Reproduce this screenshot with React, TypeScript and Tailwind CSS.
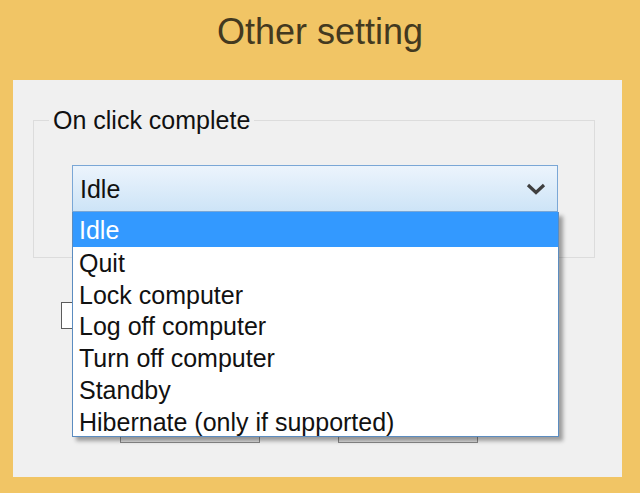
import React from "react";

const options = [
    "Quit",
    "Lock computer",
    "Log off computer",
    "Turn off computer",
    "Standby",
    "Hibernate (only if supported)",
];

export default function App() {
    return (
        <div
            className="w-[640px] h-[493px] bg-[#f1c565] flex flex-col overflow-hidden"
            style={{ fontFamily: '"Liberation Sans", Arial, sans-serif' }}
        >
            {/* Title */}
            <div className="h-[80px] pt-[10px] text-center text-[36px] leading-[44px] text-[#43391f]">
                Other setting
            </div>

            {/* Panel */}
            <div className="ml-[13px] w-[609px] h-[397px] bg-[#f0f0f0] flex flex-col">
                <fieldset className="ml-[20px] mt-[25px] w-[562px] h-[153px] border border-[#dcdcdc] pt-[30px]">
                    <legend className="ml-[15px] px-[4px] text-[25px] leading-[30px] text-[#111]">
                        On click complete
                    </legend>

                    <div className="relative z-10 ml-[38px] w-[486px]">
                        {/* Combobox */}
                        <div className="h-[47px] border border-[#7aa7d6] bg-gradient-to-b from-[#ecf4fc] to-[#cde4f7] flex items-center justify-between pl-[7px] pr-[11px]">
                            <span className="text-[25px] leading-[30px] text-[#111]">Idle</span>
                            <svg width="20" height="12" viewBox="0 0 20 12">
                                <path d="M2 2 L10 9.5 L18 2" fill="none" stroke="#3f3f3f" strokeWidth="3.2" />
                            </svg>
                        </div>

                        {/* Dropdown list */}
                        <div className="absolute left-0 top-full w-[487px] h-[225px] bg-white border border-[#5b8cc0] border-t-0 shadow-[4px_4px_4px_rgba(0,0,0,0.35)] flex flex-col">
                            <div className="h-[35px] shrink-0 bg-[#3399ff] text-white pl-[6px] flex items-center text-[25px] leading-[30px]">
                                Idle
                            </div>
                            {options.map((o) => (
                                <div
                                    key={o}
                                    className="h-[31.8px] shrink-0 pl-[6px] flex items-center text-[25px] leading-[30px] text-[#111]"
                                >
                                    {o}
                                </div>
                            ))}
                        </div>
                    </div>
                </fieldset>

                {/* Checkbox (behind list) */}
                <div className="ml-[48px] mt-[44px] w-[27px] h-[27px] border border-[#5c5c5c] bg-white flex items-center justify-center">
                    <div className="w-[5px] h-[5px] bg-[#222]" />
                </div>

                {/* Buttons (behind list) */}
                <div className="ml-[107px] mt-[77px] flex gap-[78px]">
                    <div className="w-[140px] h-[37px] bg-[#e1e1e1] border border-[#8a8a8a]" />
                    <div className="w-[140px] h-[37px] bg-[#e1e1e1] border border-[#8a8a8a]" />
                </div>
            </div>
        </div>
    );
}
